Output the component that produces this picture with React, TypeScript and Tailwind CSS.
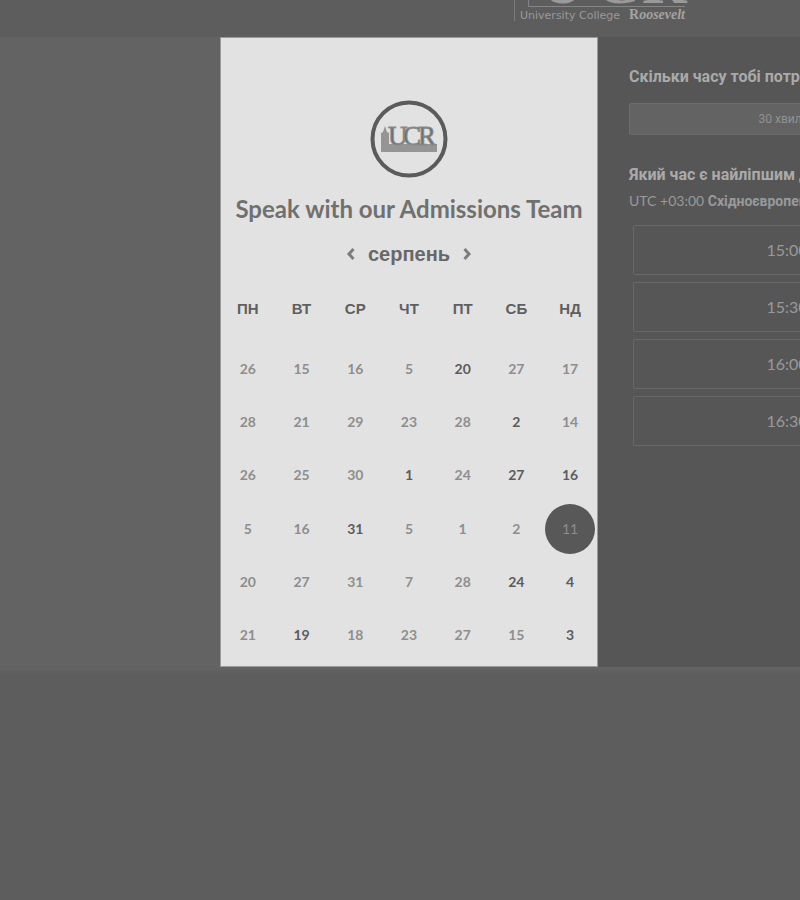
import { useState } from "react";

type Day = { n: number; open?: boolean };

const weekdays = ["ПН", "ВТ", "СР", "ЧТ", "ПТ", "СБ", "НД"];

const d = (n: number): Day => ({ n });
const o = (n: number): Day => ({ n, open: true });

const weeks: Day[][] = [
  [d(26), d(15), d(16), d(5), o(20), d(27), d(17)],
  [d(28), d(21), d(29), d(23), d(28), o(2), d(14)],
  [d(26), d(25), d(30), o(1), d(24), o(27), o(16)],
  [d(5), d(16), o(31), d(5), d(1), d(2), o(11)],
  [d(20), d(27), d(31), d(7), d(28), o(24), o(4)],
  [d(21), o(19), d(18), d(23), d(27), d(15), o(3)],
];

const slots = ["15:00", "15:30", "16:00", "16:30"];

const cyrillic = "font-['Liberation_Sans',sans-serif]";
const panelFont = "font-['Roboto',sans-serif]";

function HeaderLogo() {
  return (
    <svg width="176" height="64" viewBox="0 0 176 64" role="img" aria-label="University College Roosevelt">
      <path d="M1.500 0V64" stroke="#7c7c7c" />
      <path d="M15.500 0V49.500H172" stroke="#858585" fill="none" />
      <g fill="#9a9a9a" fontFamily="Liberation Serif, serif" fontWeight="700" fontSize="62">
        <text x="27" y="46">U</text>
        <text x="82" y="46">C</text>
        <text x="129" y="46">R</text>
      </g>
      <text x="7" y="62" fill="#999999" fontFamily="DejaVu Sans, sans-serif" fontSize="11">
        University College
      </text>
      <text x="116" y="62" fill="#a3a3a3" fontFamily="Liberation Serif, serif" fontSize="14" fontWeight="700">
        R<tspan fontStyle="italic">oosevelt</tspan>
      </text>
    </svg>
  );
}

function CardLogo() {
  return (
    <svg width="80" height="80" viewBox="0 0 80 80" role="img" aria-label="UCR">
      <circle cx="40" cy="40" r="36.500" fill="none" stroke="#5b5b5b" strokeWidth="4" />
      <path d="M12 53V34L14 33L16 27L18 33L20 34V45H68V53Z" fill="#959595" />
      <g
        fill="#6e6e6e"
        stroke="#8a8a8a"
        strokeWidth="1"
        fontFamily="Liberation Serif, serif"
        fontSize="27"
      >
        <text x="19" y="46">U</text>
        <text x="34" y="46">C</text>
        <text x="49" y="46">R</text>
      </g>
    </svg>
  );
}

function Chevron({ flip }: { flip?: boolean }) {
  return (
    <svg width="10" height="14" viewBox="0 0 10 14" aria-hidden="true" className={flip ? "rotate-180" : ""}>
      <path d="M7.500 2L3 7L7.500 12" fill="none" stroke="#7d7d7d" strokeWidth="3" />
    </svg>
  );
}

function Calendar() {
  const [selected, setSelected] = useState("3-6");
  return (
    <table className="h-[378px] w-full table-fixed border-collapse">
      <thead>
        <tr className="h-[58px]">
          {weekdays.map((w) => (
            <th key={w} scope="col" className={`p-0 pb-2 text-center text-[15px] font-bold text-[#5f5f5f] ${cyrillic}`}>
              {w}
            </th>
          ))}
        </tr>
      </thead>
      <tbody>
        {weeks.map((week, r) => (
          <tr key={r}>
            {week.map((day, c) => {
              const id = `${r}-${c}`;
              const look =
                id === selected
                  ? "bg-[#585858] text-[#8c8c8c]"
                  : day.open
                    ? "font-bold text-[#5c5c5c]"
                    : "font-bold text-[#8e8e8e]";
              return (
                <td key={id} className="p-0 text-center">
                  <button
                    type="button"
                    disabled={!day.open}
                    aria-pressed={id === selected}
                    onClick={() => setSelected(id)}
                    className={`size-[50px] rounded-full align-middle text-sm ${look}`}
                  >
                    {day.n}
                  </button>
                </td>
              );
            })}
          </tr>
        ))}
      </tbody>
    </table>
  );
}

export default function App() {
  return (
    <div className="min-h-screen overflow-hidden bg-[#5d5d5d] font-['Lato',sans-serif]">
      <header className="flex h-[37px] items-end overflow-hidden pb-4 pl-[513px]">
        <HeaderLogo />
      </header>

      <main className="flex bg-[#565656]">
        <div className="w-[220px] shrink-0 border-b border-[#616161] bg-[#636363]" />

        <section className="flex w-[378px] shrink-0 flex-col items-center border border-[#9a9a9a] bg-[#e2e2e2] pt-[61px] pb-1">
          <CardLogo />
          <h1 className="mt-[14px] text-2xl leading-8 font-bold whitespace-nowrap text-[#707070]">
            Speak with our Admissions Team
          </h1>
          <div className="mt-[13px] mb-[14px] flex h-8 items-center gap-3">
            <button type="button" aria-label="Попередній місяць">
              <Chevron />
            </button>
            <h2 className={`text-xl font-bold text-[#686868] ${cyrillic}`}>серпень</h2>
            <button type="button" aria-label="Наступний місяць">
              <Chevron flip />
            </button>
          </div>
          <Calendar />
        </section>

        <section className="w-[378px] shrink-0 pt-7 pr-[31px] pl-[31px] whitespace-nowrap">
          <h2 className={`text-base leading-6 font-bold text-[#aaaaaa] ${panelFont}`}>Скільки часу тобі потрібно?</h2>
          <button
            type="button"
            className={`mt-[14px] h-8 w-full rounded-xs border border-[#6c6c6c] bg-[#636363] text-xs text-[#929292] ${panelFont}`}
          >
            30 хвилин
          </button>
          <h2 className={`mt-7 text-base leading-6 font-bold text-[#aaaaaa] ${panelFont}`}>
            Який час є найліпшим для тебе?
          </h2>
          <p className="text-sm leading-7 text-[#999999]">
            UTC +03:00 <span className={`font-bold ${panelFont}`}>Східноєвропейський час</span>
          </p>
          <div className="mx-1 mt-[10px] flex flex-col gap-[7px]">
            {slots.map((s) => (
              <button
                key={s}
                type="button"
                className="h-[50px] rounded-xs border border-[#686868] text-base text-[#999999]"
              >
                {s}
              </button>
            ))}
          </div>
        </section>
      </main>
      <div className="h-2 bg-linear-to-b from-[#646464] to-[#5d5d5d]" />
    </div>
  );
}
